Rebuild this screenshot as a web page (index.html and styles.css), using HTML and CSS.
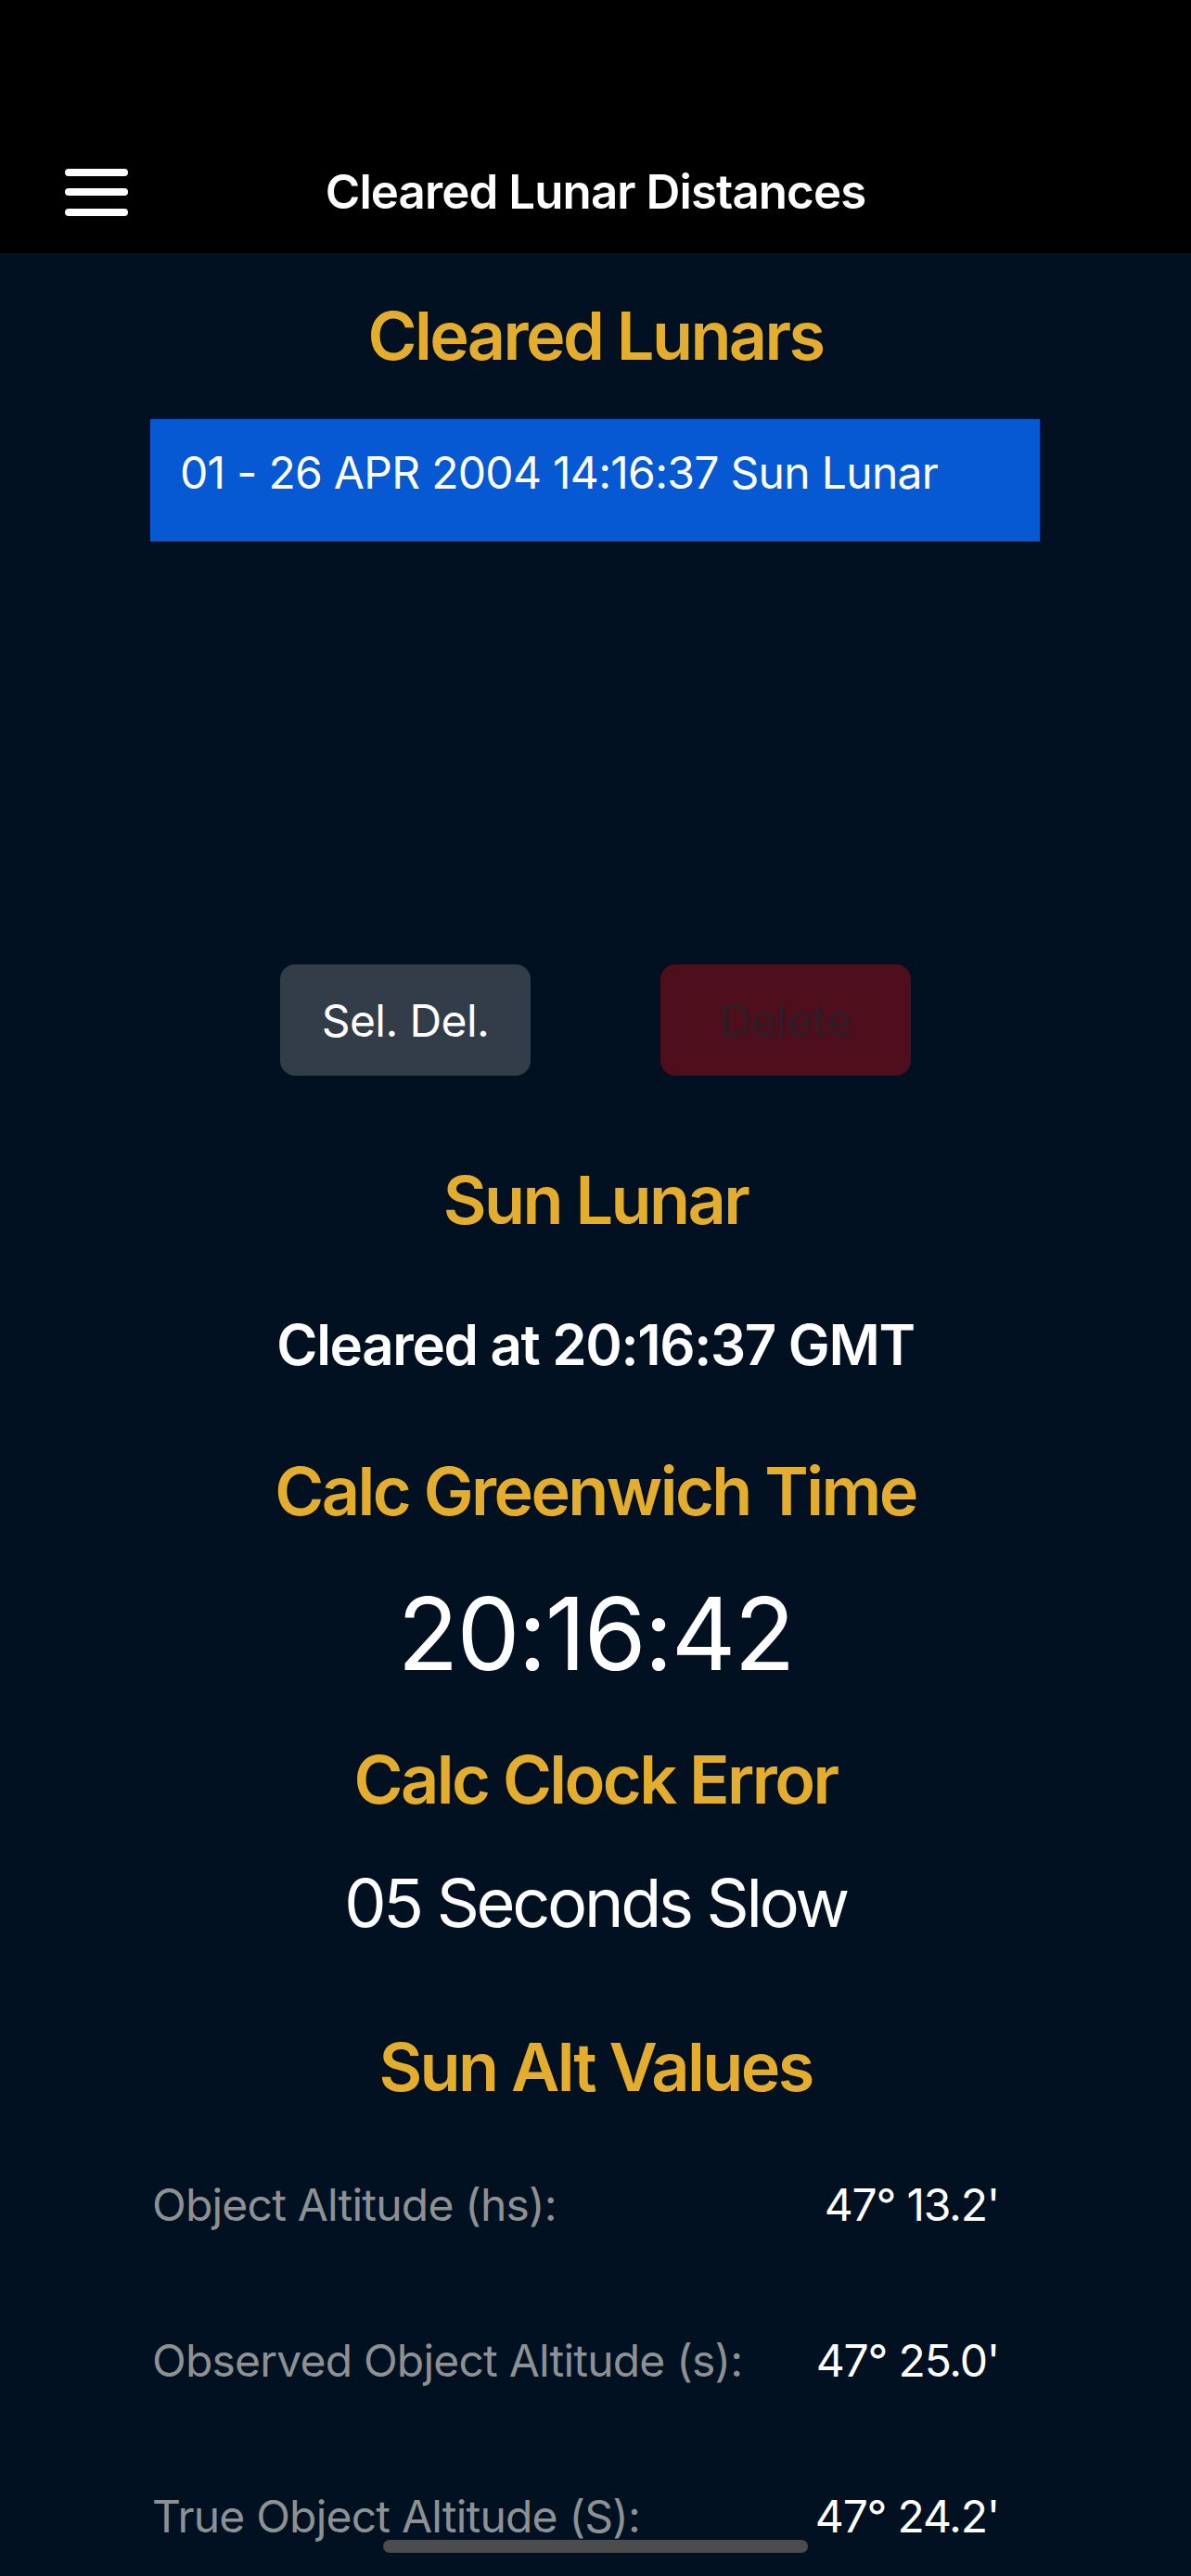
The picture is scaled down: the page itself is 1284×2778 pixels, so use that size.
FILE: index.html
```html
<!DOCTYPE html>
<html lang="en">
<head>
<meta charset="utf-8">
<title>Cleared Lunar Distances</title>
<link rel="stylesheet" href="styles.css">
</head>
<body>
<header class="topbar">
  <div class="topbar-row">
    <button class="menu-btn" aria-label="Menu">
      <span class="bar"></span><span class="bar"></span><span class="bar"></span>
    </button>
    <h1 class="topbar-title">Cleared Lunar Distances</h1>
    <span class="spacer"></span>
  </div>
</header>
<main class="content">
  <h2 class="heading first">Cleared Lunars</h2>
  <div class="listbox">
    <div class="option selected">01 - 26 APR 2004 14:16:37 Sun Lunar</div>
  </div>
  <div class="actions">
    <button class="btn btn-secondary">Sel. Del.</button>
    <button class="btn btn-danger" disabled>Delete</button>
  </div>
  <h2 class="heading sun-lunar">Sun Lunar</h2>
  <p class="cleared-at">Cleared at 20:16:37 GMT</p>
  <h2 class="heading greenwich">Calc Greenwich Time</h2>
  <p class="big-time">20:16:42</p>
  <h2 class="heading clock-error">Calc Clock Error</h2>
  <p class="error-value">05 Seconds Slow</p>
  <h2 class="heading alt-values">Sun Alt Values</h2>
  <div class="values">
    <div class="row"><span class="label">Object Altitude (hs):</span><span class="value">47° 13.2'</span></div>
    <div class="row"><span class="label">Observed Object Altitude (s):</span><span class="value">47° 25.0'</span></div>
    <div class="row"><span class="label">True Object Altitude (S):</span><span class="value">47° 24.2'</span></div>
  </div>
</main>
<div class="home-indicator"></div>
</body>
</html>
```
FILE: styles.css
```css
html, body {
  margin: 0;
  padding: 0;
}
body {
  width: 1284px;
  height: 2778px;
  overflow: hidden;
  background: #011121;
  font-family: "Inter", "Noto Sans", sans-serif;
  color: #ffffff;
}
.topbar {
  background: #000000;
  height: 273px;
  padding-top: 141px;
  box-sizing: border-box;
}
.topbar-row {
  height: 132px;
  display: grid;
  grid-template-columns: 1fr auto 1fr;
  align-items: center;
}
.menu-btn {
  justify-self: start;
  margin-left: 70px;
  background: none;
  border: 0;
  padding: 0;
  width: 68px;
  display: flex;
  flex-direction: column;
  gap: 13.5px;
}
.bar {
  display: block;
  width: 68px;
  height: 8px;
  border-radius: 4px;
  background: #ffffff;
}
.topbar-title {
  margin: 0;
  font-size: 51px;
  font-weight: 600;
  line-height: 60px;
  letter-spacing: -0.9px;
  color: #ffffff;
}
.content {
  display: flex;
  flex-direction: column;
  align-items: center;
}
.heading {
  margin: 0;
  font-size: 72px;
  font-weight: 600;
  line-height: 100px;
  color: #e4ad2e;
  letter-spacing: -2.6px;
}
.heading.first { margin-top: 39px; }
.listbox {
  margin-top: 40px;
  width: 959px;
  height: 540px;
  align-self: flex-start;
  margin-left: 162px;
}
.option {
  height: 132px;
  box-sizing: border-box;
  padding: 29px 32px 45px;
  font-size: 48px;
  line-height: 58px;
  letter-spacing: -0.7px;
  white-space: nowrap;
}
.option.selected {
  background: #0659d2;
  color: #ffffff;
}
.actions {
  margin-top: 48px;
  display: flex;
  gap: 140px;
}
.btn {
  width: 270px;
  height: 120px;
  border: 0;
  border-radius: 16px;
  font-family: inherit;
  font-size: 48px;
  font-weight: 400;
  letter-spacing: -0.6px;
  padding: 0;
}
.btn-secondary {
  background: #333d49;
  color: #ffffff;
}
.btn-danger {
  background: #4e0e1b;
  color: #2e1c26;
}
.heading.sun-lunar { margin-top: 84px; }
.cleared-at {
  margin: 66px 0 0;
  font-size: 60px;
  font-weight: 600;
  line-height: 80px;
  letter-spacing: -1.35px;
}
.heading.greenwich { margin-top: 68px; }
.big-time {
  margin: 39px 0 0;
  font-size: 108px;
  font-weight: 400;
  line-height: 130px;
  letter-spacing: -2px;
}
.heading.clock-error { margin-top: 42px; }
.error-value {
  margin: 33px 0 0;
  font-size: 72px;
  font-weight: 400;
  line-height: 100px;
  letter-spacing: -3.3px;
}
.heading.alt-values { margin-top: 77px; }
.values {
  margin-top: 59px;
  align-self: stretch;
  padding: 0 207px 0 164px;
  display: flex;
  flex-direction: column;
  gap: 88px;
}
.row {
  display: flex;
  justify-content: space-between;
  height: 80px;
  line-height: 80px;
  font-size: 48px;
}
.label {
  color: #8e9194;
  letter-spacing: -0.8px;
}
.value {
  color: #ffffff;
  letter-spacing: -1.2px;
}
.home-indicator {
  position: fixed;
  left: 413px;
  bottom: 25px;
  width: 458px;
  height: 14px;
  border-radius: 7px;
  background: #4c4c4c;
}
```
